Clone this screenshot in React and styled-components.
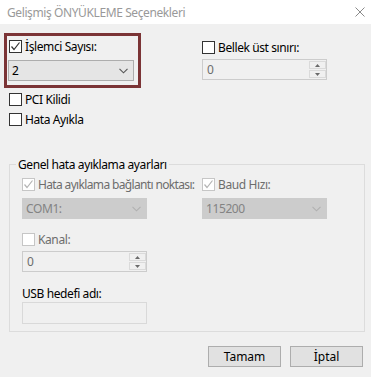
import React from "react";
import styled, { createGlobalStyle } from "styled-components";

const Global = createGlobalStyle`
  html, body { margin: 0; padding: 0; background: #f0f0f0; }
  body {
    font-family: "Noto Sans", "Liberation Sans", sans-serif;
    font-size: 12px;
    letter-spacing: -0.4px;
  }
  * { box-sizing: border-box; }
`;

const Window = styled.div`
  width: 371px;
  height: 377px;
  background: #f0f0f0;
  display: flex;
  flex-direction: column;
  overflow: hidden;
`;

const TitleBar = styled.div`
  height: 24px;
  background: #ffffff;
  display: flex;
  align-items: center;
  justify-content: space-between;
  padding: 0 6px 0 7px;
`;

const Title = styled.span`
  color: #999999;
  font-size: 12px;
  line-height: 15px;
`;

const Close = styled.svg`
  width: 10px;
  height: 10px;
`;

const TopRow = styled.div`
  display: flex;
  margin-top: 9px;
  margin-left: 4px;
`;

const Highlight = styled.div`
  width: 137px;
  border: 3px solid #7b3436;
  padding: 4px 4px 4px 1px;
  display: flex;
  flex-direction: column;
  gap: 7px;
`;

const RightCol = styled.div`
  margin-left: 61px;
  padding-top: 8px;
  display: flex;
  flex-direction: column;
  gap: 5px;
`;

const CheckRow = styled.label`
  display: flex;
  align-items: center;
  gap: 3px;
  height: 13px;
  margin-left: ${(p) => p.$indent || 0}px;
  margin-top: ${(p) => p.$top || 0}px;
  color: ${(p) => (p.$disabled ? "#6d6d6d" : "#000")};
  line-height: 13px;
  white-space: nowrap;
`;

const LabelText = styled.span`
  letter-spacing: ${(p) => (p.$tight ? "-0.65px" : "inherit")};
`;

const Box = styled.span`
  width: 13px;
  height: 13px;
  flex: none;
  border: 1px solid ${(p) => (p.$disabled ? "#c6c6c6" : "#333333")};
  background: #ffffff;
  display: flex;
  align-items: center;
  justify-content: center;
`;

const Check = ({ checked, disabled }) => (
  <Box $disabled={disabled}>
    {checked && (
      <svg width="11" height="11" viewBox="0 0 11 11">
        <path
          d="M1.5 5.5 L4 8.5 L9.5 1.5"
          fill="none"
          stroke={disabled ? "#b4b4b4" : "#333"}
          strokeWidth="1.2"
        />
      </svg>
    )}
  </Box>
);

const Combo = styled.div`
  width: ${(p) => p.$w || 125}px;
  height: 21px;
  border: 1px solid ${(p) => (p.$disabled ? "#cccccc" : "#adadad")};
  background: ${(p) => (p.$disabled ? "#cccccc" : "#e5e5e5")};
  color: ${(p) => (p.$disabled ? "#838383" : "#000")};
  display: flex;
  align-items: center;
  justify-content: space-between;
  padding: 0 5px 0 3px;
`;

const Chevron = ({ disabled }) => (
  <svg width="9" height="6" viewBox="0 0 9 6">
    <path d="M0.5 0.8 L4.5 4.8 L8.5 0.8" fill="none" stroke={disabled ? "#b0b0b0" : "#555"} strokeWidth="1.1" />
  </svg>
);

const Spin = styled.div`
  width: 125px;
  height: 21px;
  border: 1px solid #cccccc;
  background: #f0f0f0;
  color: #6d6d6d;
  display: flex;
  align-items: stretch;
  justify-content: space-between;
  padding-left: 4px;
`;

const SpinValue = styled.span`
  align-self: center;
`;

const SpinButtons = styled.div`
  width: 17px;
  display: flex;
  flex-direction: column;
  gap: 1px;
  padding: 1px 0;
`;

const SpinBtn = styled.div`
  flex: 1;
  border: 1px solid #dadada;
  background: #f0f0f0;
  display: flex;
  align-items: center;
  justify-content: center;
`;

const Tri = ({ up }) => (
  <svg width="5" height="3" viewBox="0 0 5 3">
    <path d={up ? "M0 3 L2.5 0 L5 3 Z" : "M0 0 L5 0 L2.5 3 Z"} fill="#6a6a6a" />
  </svg>
);

const SpinBox = ({ value }) => (
  <Spin>
    <SpinValue>{value}</SpinValue>
    <SpinButtons>
      <SpinBtn>
        <Tri up />
      </SpinBtn>
      <SpinBtn>
        <Tri />
      </SpinBtn>
    </SpinButtons>
  </Spin>
);

const Group = styled.fieldset`
  margin: ${(p) => p.$top}px 0 0 9px;
  width: 356px;
  border: 1px solid #dcdcdc;
  padding: 0 0 7px 12px;
  min-width: 0;
`;

const Legend = styled.legend`
  margin-left: -6px;
  padding: 0 2px;
  line-height: 15px;
  color: #000;
`;

const GroupGrid = styled.div`
  display: grid;
  grid-template-columns: 180px 1fr;
  margin-top: 6px;
`;

const Cell = styled.div`
  display: flex;
  flex-direction: column;
  margin-top: ${(p) => p.$top || 0}px;
  gap: ${(p) => p.$gap || 0}px;
`;

const Caption = styled.div`
  line-height: 15px;
  color: #000;
`;

const TextBox = styled.div`
  width: 125px;
  height: 22px;
  border: 1px solid #d9d9d9;
  background: #f0f0f0;
`;

const Buttons = styled.div`
  display: flex;
  justify-content: flex-end;
  gap: 9px;
  padding-right: 8px;
  margin-top: 14px;
`;

const Button = styled.button`
  width: 73px;
  height: 21px;
  border: 1px solid #adadad;
  background: #e1e1e1;
  font: inherit;
  font-size: 12px;
  color: #000;
  padding: 0;
  line-height: 19px;
`;

export default function App() {
  return (
    <>
      <Global />
      <Window>
        <TitleBar>
          <Title>Gelişmiş ÖNYÜKLEME Seçenekleri</Title>
          <Close viewBox="0 0 10 10">
            <path d="M0.5 0.5 L9.5 9.5 M9.5 0.5 L0.5 9.5" stroke="#8a8a8a" strokeWidth="1" />
          </Close>
        </TitleBar>

        <TopRow>
          <Highlight>
            <CheckRow $indent={1}>
              <Check checked />
              <LabelText>İşlemci Sayısı:</LabelText>
            </CheckRow>
            <Combo $w={126}>
              <span>2</span>
              <Chevron />
            </Combo>
          </Highlight>
          <RightCol>
            <CheckRow>
              <Check />
              <LabelText>Bellek üst sınırı:</LabelText>
            </CheckRow>
            <SpinBox value="0" />
          </RightCol>
        </TopRow>

        <CheckRow $indent={9} $top={5}>
          <Check />
          <LabelText>PCI Kilidi</LabelText>
        </CheckRow>
        <CheckRow $indent={9} $top={7}>
          <Check />
          <LabelText>Hata Ayıkla</LabelText>
        </CheckRow>

        <Group $top={31}>
          <Legend>Genel hata ayıklama ayarları</Legend>
          <GroupGrid>
            <Cell $gap={7}>
              <CheckRow $disabled>
                <Check checked disabled />
                <LabelText $tight>Hata ayıklama bağlantı noktası:</LabelText>
              </CheckRow>
              <Combo $disabled>
                <span>COM1:</span>
                <Chevron disabled />
              </Combo>
            </Cell>
            <Cell $gap={7}>
              <CheckRow $disabled>
                <Check checked disabled />
                <LabelText>Baud Hızı:</LabelText>
              </CheckRow>
              <Combo $disabled>
                <span>115200</span>
                <Chevron disabled />
              </Combo>
            </Cell>
            <Cell $top={14} $gap={5}>
              <CheckRow $disabled>
                <Check disabled />
                <LabelText>Kanal:</LabelText>
              </CheckRow>
              <SpinBox value="0" />
            </Cell>
            <Cell />
            <Cell $top={14} $gap={1}>
              <Caption>USB hedefi adı:</Caption>
              <TextBox />
            </Cell>
          </GroupGrid>
        </Group>

        <Buttons>
          <Button>Tamam</Button>
          <Button>İptal</Button>
        </Buttons>
      </Window>
    </>
  );
}
